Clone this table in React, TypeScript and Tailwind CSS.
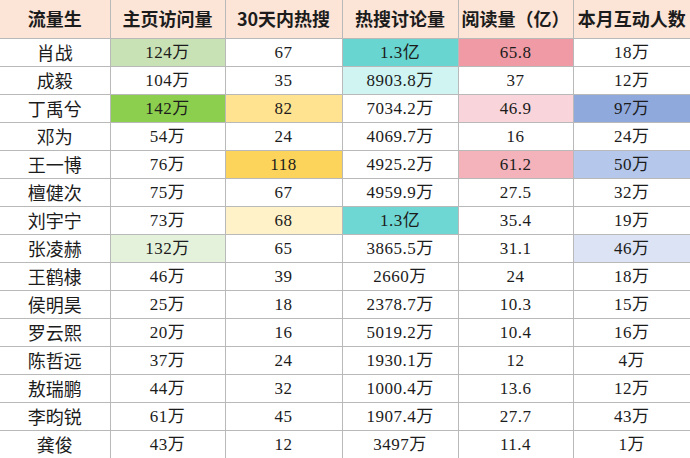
const headers = ["流量生", "主页访问量", "30天内热搜", "热搜讨论量", "阅读量（亿）", "本月互动人数"];

const widths = ["w-[110px]", "w-[115px]", "w-[117px]", "w-[116px]", "w-[115px]", "w-[117px]"];

type Row = { name: string; cells: string[]; bg?: (string | null)[] };

const rows: Row[] = [
  { name: "肖战", cells: ["124万", "67", "1.3亿", "65.8", "18万"], bg: ["bg-[#c8e2b6]", null, "bg-[#68d5d0]", "bg-[#ef9aa4]", null] },
  { name: "成毅", cells: ["104万", "35", "8903.8万", "37", "12万"], bg: [null, null, "bg-[#cff4f1]", null, null] },
  { name: "丁禹兮", cells: ["142万", "82", "7034.2万", "46.9", "97万"], bg: ["bg-[#8ccf4e]", "bg-[#ffe391]", null, "bg-[#f9d4db]", "bg-[#8fa9dc]"] },
  { name: "邓为", cells: ["54万", "24", "4069.7万", "16", "24万"] },
  { name: "王一博", cells: ["76万", "118", "4925.2万", "61.2", "50万"], bg: [null, "bg-[#fdd45b]", null, "bg-[#f4b3bb]", "bg-[#b5c7ea]"] },
  { name: "檀健次", cells: ["75万", "67", "4959.9万", "27.5", "32万"] },
  { name: "刘宇宁", cells: ["73万", "68", "1.3亿", "35.4", "19万"], bg: [null, "bg-[#fff2c8]", "bg-[#6fd7d3]", null, null] },
  { name: "张凌赫", cells: ["132万", "65", "3865.5万", "31.1", "46万"], bg: ["bg-[#e4f1db]", null, null, null, "bg-[#dbe3f4]"] },
  { name: "王鹤棣", cells: ["46万", "39", "2660万", "24", "18万"] },
  { name: "侯明昊", cells: ["25万", "18", "2378.7万", "10.3", "15万"] },
  { name: "罗云熙", cells: ["20万", "16", "5019.2万", "10.4", "16万"] },
  { name: "陈哲远", cells: ["37万", "24", "1930.1万", "12", "4万"] },
  { name: "敖瑞鹏", cells: ["44万", "32", "1000.4万", "13.6", "12万"] },
  { name: "李昀锐", cells: ["61万", "45", "1907.4万", "27.7", "43万"] },
  { name: "龚俊", cells: ["43万", "12", "3497万", "11.4", "1万"] },
];

const sans = "font-['Noto_Sans_CJK_SC',sans-serif]";
const serif = "font-['Liberation_Serif','Noto_Sans_CJK_SC',serif]";

export default function App() {
  return (
    <div className="w-[690px] h-[458px] overflow-hidden bg-white text-[#1c1c1c]">
      <table className="table-fixed border-collapse w-[690px]">
        <thead>
          <tr className="h-[38px] bg-[#fce4d6]">
            {headers.map((h, i) => (
              <th
                key={h}
                className={`${widths[i]} ${sans} p-0 text-center text-[18px] font-bold border-b border-[#b9b9b9] ${
                  i < 5 ? "border-r" : ""
                }`}
              >
                {h}
              </th>
            ))}
          </tr>
        </thead>
        <tbody>
          {rows.map((r) => (
            <tr key={r.name} className="h-[28px]">
              <td className={`${sans} p-0 text-center text-[18px] leading-none border-b border-r border-[#b9b9b9]`}>
                {r.name}
              </td>
              {r.cells.map((c, j) => (
                <td
                  key={j}
                  className={`${serif} p-0 text-center text-[17px] leading-none tracking-[0.5px] border-b border-[#b9b9b9] ${
                    j < 4 ? "border-r" : ""
                  } ${r.bg?.[j] ?? ""}`}
                >
                  {c}
                </td>
              ))}
            </tr>
          ))}
        </tbody>
      </table>
    </div>
  );
}
